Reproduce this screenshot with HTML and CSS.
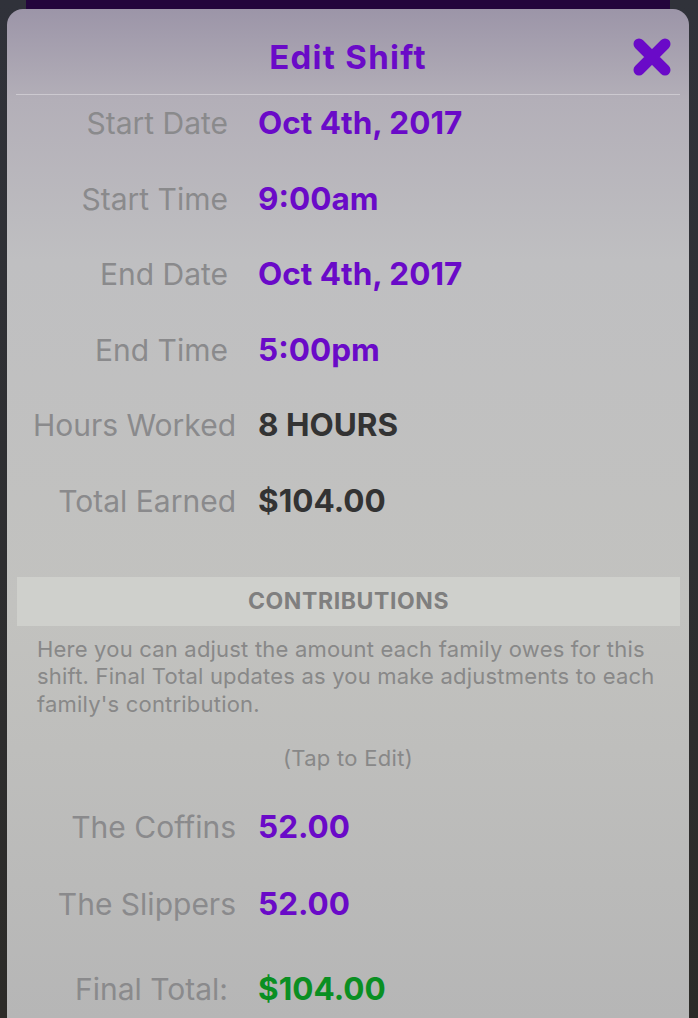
FILE: index.html
```html
<!DOCTYPE html>
<html lang="en">
<head>
<meta charset="utf-8">
<title>Edit Shift</title>
<link rel="stylesheet" href="styles.css">
</head>
<body>
<div class="backdrop-bar"></div>
<div class="card">
  <div class="header">
    <div class="spacer"></div>
    <h1 class="title">Edit Shift</h1>
    <button class="close" aria-label="Close">
      <svg width="38" height="38" viewBox="0 0 38 38"><path d="M6 6 L32 32 M32 6 L6 32" stroke="#6a0ac8" stroke-width="11" stroke-linecap="round"/></svg>
    </button>
  </div>
  <div class="divider"></div>
  <div class="rows">
    <div class="row short"><span class="label">Start Date</span><span class="value purple">Oct 4th, 2017</span></div>
    <div class="row short"><span class="label">Start Time</span><span class="value purple">9:00am</span></div>
    <div class="row short"><span class="label">End Date</span><span class="value purple">Oct 4th, 2017</span></div>
    <div class="row short"><span class="label">End Time</span><span class="value purple">5:00pm</span></div>
    <div class="row"><span class="label">Hours Worked</span><span class="value dark">8 HOURS</span></div>
    <div class="row"><span class="label">Total Earned</span><span class="value dark">$104.00</span></div>
  </div>
  <div class="section-band">CONTRIBUTIONS</div>
  <p class="desc">Here you can adjust the amount each family owes for this shift. Final Total updates as you make adjustments to each family's contribution.</p>
  <p class="hint">(Tap to Edit)</p>
  <div class="family-rows">
    <div class="row"><span class="label">The Coffins</span><span class="value purple">52.00</span></div>
    <div class="row"><span class="label">The Slippers</span><span class="value purple">52.00</span></div>
    <div class="row total"><span class="label">Final Total:</span><span class="value green">$104.00</span></div>
  </div>
</div>
</body>
</html>
```

FILE: styles.css
```css
html, body {
  margin: 0;
  height: 100%;
  overflow: hidden;
}
body {
  background: linear-gradient(#30323a, #2c2b28);
  font-family: "Inter", "Noto Sans", sans-serif;
}
.backdrop-bar {
  height: 9px;
  margin: 0 28px 0 26px;
  background: #23053c;
}
.card {
  margin: 0 9px 0 7px;
  min-height: calc(100vh - 9px);
  border-radius: 16px 16px 0 0;
  background: linear-gradient(#9c95a8 0%, #b3afb8 9%, #bfbfc1 25%, #c2c2bf 60%, #b6b6b6 100%);
}
.header {
  height: 75px;
  padding-top: 10px;
  display: grid;
  grid-template-columns: 1fr auto 1fr;
  align-items: center;
}
.title {
  margin: 0;
  font-size: 33px;
  font-weight: 700;
  color: #6a0ac8;
  letter-spacing: 1.3px;
}
.close {
  justify-self: end;
  margin-right: 18px;
  padding: 0;
  border: 0;
  background: none;
  width: 38px;
  height: 38px;
  display: flex;
}
.divider {
  height: 1px;
  margin: 0 9px;
  background: rgba(255, 255, 255, 0.35);
}
.rows {
  padding-top: 10px;
  display: flex;
  flex-direction: column;
  gap: 39.6px;
}
.row {
  display: grid;
  grid-template-columns: 229px 1fr;
  column-gap: 22px;
  line-height: 36px;
}
.label {
  text-align: right;
  font-size: 30px;
  color: #8a8a8c;
  white-space: nowrap;
}
.row.short .label {
  padding-right: 8px;
}
.value {
  font-size: 31.5px;
  font-weight: 700;
  white-space: nowrap;
}
.purple { color: #6a0ac8; }
.dark { color: #333333; }
.green { color: #0a8f22; }
.section-band {
  margin: 58px 9px 0 10px;
  height: 49px;
  line-height: 49px;
  background: #cfd0cc;
  text-align: center;
  color: #7f7f7f;
  font-weight: 700;
  font-size: 23px;
  letter-spacing: 0.6px;
}
.desc {
  margin: 10px 20px 0 30px;
  font-size: 22px;
  letter-spacing: 0.2px;
  line-height: 27.5px;
  color: #888888;
}
.hint {
  margin: 27px 0 0;
  text-align: center;
  font-size: 22px;
  letter-spacing: 0.3px;
  line-height: 27px;
  color: #888888;
}
.family-rows {
  margin-top: 36.5px;
  display: flex;
  flex-direction: column;
  gap: 41px;
}
.row.total {
  margin-top: 8px;
}
.row.total .label {
  padding-right: 8px;
}
```
